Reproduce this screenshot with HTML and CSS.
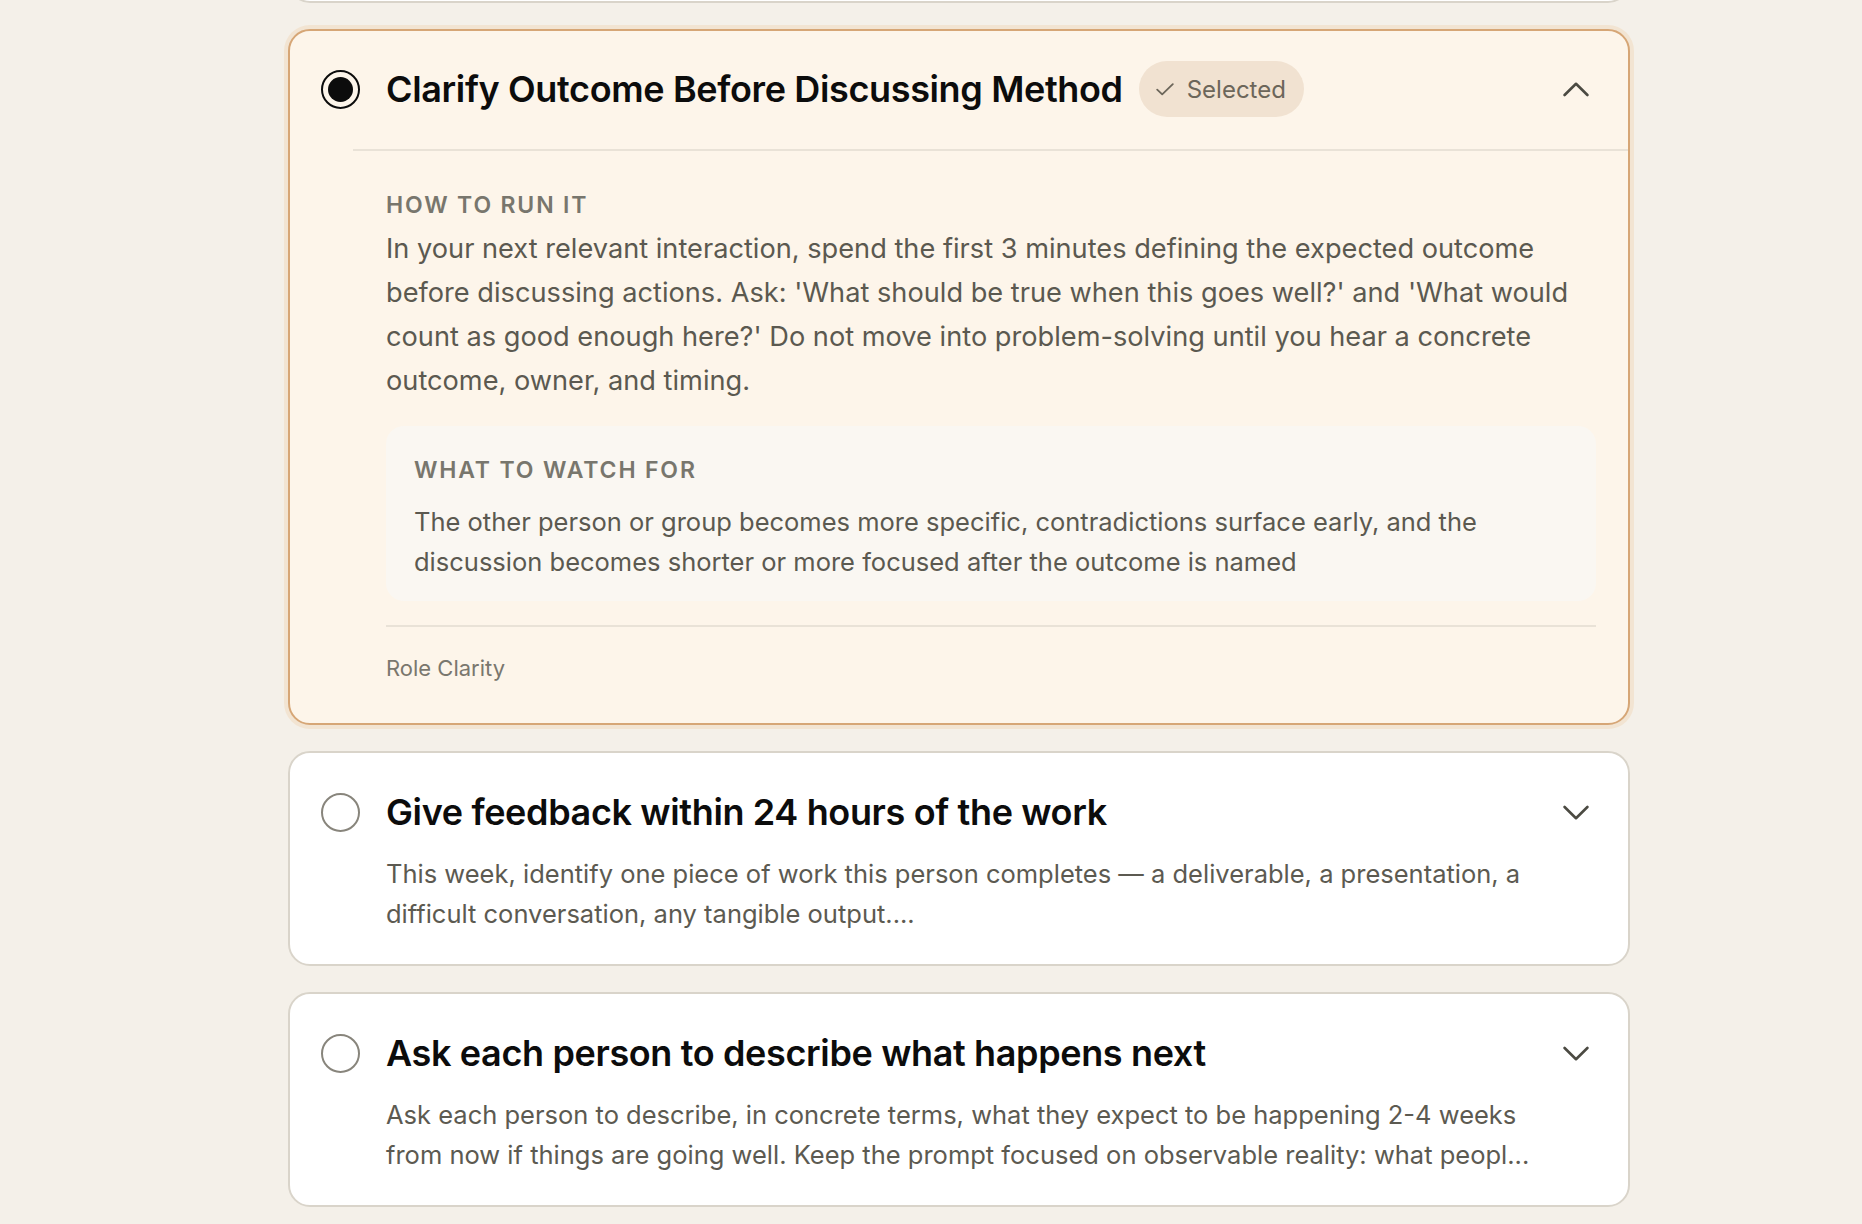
FILE: index.html
```html
<!DOCTYPE html>
<html lang="en">
    <head>
        <meta charset="UTF-8">
        <meta name="viewport" content="width=device-width, initial-scale=1.0">
        <title>Choose an experiment</title>
        <link rel="stylesheet" href="styles.css">
    </head>
    <body>
        <div class="options">
            <!-- previous option, scrolled mostly out of view -->
            <div class="option option-stub"></div>

            <div class="option selected">
                <div class="option-head">
                    <span class="radio on"></span>
                    <h3 class="option-title">Clarify Outcome Before Discussing Method</h3>
                    <span class="badge">
                        <svg width="18" height="13" viewBox="0 0 18 13"><path d="M1.2 6.6 L6.2 11.4 L16.8 1.2" fill="none" stroke="#6c665a" stroke-width="1.8" stroke-linecap="round" stroke-linejoin="round"/></svg>
                        Selected
                    </span>
                    <svg class="toggle" width="26" height="15" viewBox="0 0 26 15"><path d="M1.6 13 L13 1.8 L24.4 13" fill="none" stroke="#4b4a42" stroke-width="2.6" stroke-linecap="round" stroke-linejoin="round"/></svg>
                </div>
                <div class="details">
                    <h4 class="label">How to run it</h4>
                    <p class="how">In your next relevant interaction, spend the first 3 minutes defining the expected outcome before discussing actions. Ask: 'What should be true when this goes well?' and 'What would count as good enough here?' Do not move into problem-solving until you hear a concrete outcome, owner, and timing.</p>
                    <div class="watch">
                        <h4 class="label">What to watch for</h4>
                        <p>The other person or group becomes more specific, contradictions surface early, and the discussion becomes shorter or more focused after the outcome is named</p>
                    </div>
                    <div class="meta">Role Clarity</div>
                </div>
            </div>

            <div class="option">
                <div class="option-head">
                    <span class="radio"></span>
                    <h3 class="option-title">Give feedback within 24 hours of the work</h3>
                    <svg class="toggle" width="26" height="15" viewBox="0 0 26 15"><path d="M1.6 2 L13 13.2 L24.4 2" fill="none" stroke="#4b4a42" stroke-width="2.6" stroke-linecap="round" stroke-linejoin="round"/></svg>
                </div>
                <p class="summary">This week, identify one piece of work this person completes — a deliverable, a presentation, a difficult conversation, any tangible output....</p>
            </div>

            <div class="option">
                <div class="option-head">
                    <span class="radio"></span>
                    <h3 class="option-title">Ask each person to describe what happens next</h3>
                    <svg class="toggle" width="26" height="15" viewBox="0 0 26 15"><path d="M1.6 2 L13 13.2 L24.4 2" fill="none" stroke="#4b4a42" stroke-width="2.6" stroke-linecap="round" stroke-linejoin="round"/></svg>
                </div>
                <p class="summary">Ask each person to describe, in concrete terms, what they expect to be happening 2-4 weeks from now if things are going well. Keep the prompt focused on observable reality: what peopl...</p>
            </div>
        </div>
    </body>
</html>
```

FILE: styles.css
```css
* { box-sizing: border-box; }
body { margin: 0; background: #f4f0e9; font-family: Inter, "Noto Sans", sans-serif; color: #111; }

.options { display: flex; flex-direction: column; gap: 26px; width: 1342px; margin: -211px 0 0 288px; }
.option { background: #fff; border: 2px solid #d9d4ca; border-radius: 22px; }
.option-stub { height: 214px; }
.option.selected { background: #fdf5ea; border-color: #d6a676; box-shadow: 0 0 0 4px #f2e4d2; }

.option-head { display: flex; align-items: center; gap: 26px; padding: 38px 39px 0 31px; }
.selected .option-head { padding-top: 30px; padding-bottom: 32px; }
.option-title { margin: 0; font-size: 36px; line-height: 42px; font-weight: 600; letter-spacing: -0.01em; color: #0c0c0c; }

.radio { flex: none; display: flex; align-items: center; justify-content: center; width: 39px; height: 39px; border: 2px solid #88857c; border-radius: 50%; }
.radio.on { border-color: #0c0c0c; }
.radio.on::after { content: ""; width: 25px; height: 25px; border-radius: 50%; background: #0c0c0c; }

.badge { display: inline-flex; align-items: center; gap: 13px; height: 56px; margin-left: -10px; padding: 0 18px 0 17px; background: #f1e2d1; border-radius: 28px; font-size: 24px; color: #6c665a; }
.toggle { flex: none; margin-left: auto; }

.summary { margin: 21px 72px 0 96px; padding-bottom: 30px; font-size: 25.5px; line-height: 40px; color: #5c5a51; }

.details { margin-left: 63px; border-top: 2px solid #e9e2d7; padding: 39px 32px 40px 33px; }
.label { margin: 0; font-size: 23px; line-height: 30px; font-weight: 600; letter-spacing: 0.08em; text-transform: uppercase; color: #78766d; }
.how { margin: 7px 0 0; font-size: 27.2px; line-height: 44px; color: #5b5950; }
.watch { margin-top: 23px; padding: 29px 28px 19px; background: #faf7f2; border-radius: 18px; }
.watch p { margin: 17px 0 0; font-size: 25.5px; line-height: 40px; color: #5b5950; }
.meta { margin-top: 24px; border-top: 2px solid #e9e2d7; padding-top: 26px; font-size: 22px; line-height: 30px; color: #7a776e; }
```
